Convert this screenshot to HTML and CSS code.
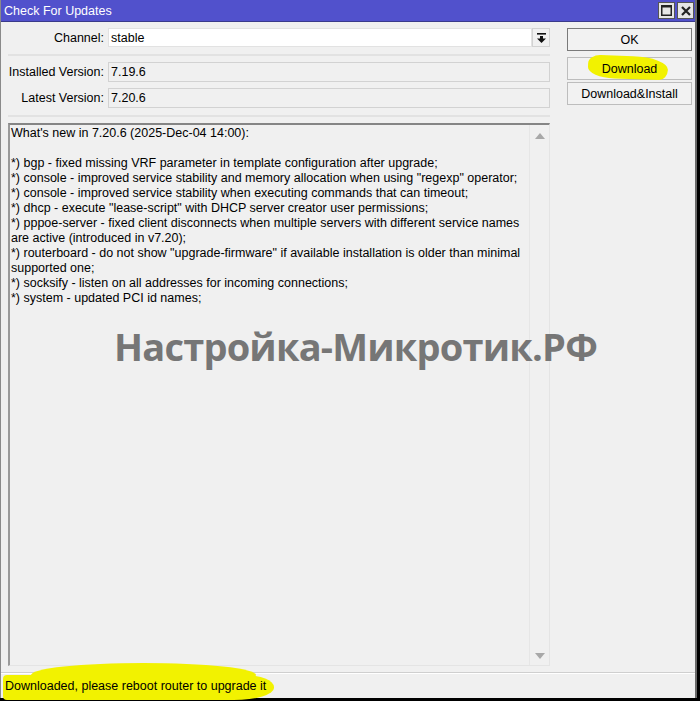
FILE: index.html
```html
<html>
  <head>
    <meta charset="utf-8">
    <link rel="stylesheet" href="styles.css">
  </head>
  <body>
    <div class="window">
      <div class="titlebar">
        <span class="title">Check For Updates</span>
        <div class="controls">
          <span class="ctl">
            <svg width="11" height="11" viewBox="0 0 11 11"><rect x="0.75" y="0.75" width="9.5" height="9.5" fill="none" stroke="#222" stroke-width="1.5"/><rect x="0" y="0" width="11" height="2.5" fill="#222"/></svg>
          </span>
          <span class="ctl">
            <svg width="10" height="10" viewBox="0 0 10 10"><path d="M1 1 L9 9 M9 1 L1 9" stroke="#222" stroke-width="2.2"/></svg>
          </span>
        </div>
      </div>

      <div class="content">
        <div class="left">
          <div class="row first">
            <label>Channel:</label>
            <div class="combo">
              <span class="field white">stable</span>
              <span class="drop">
                <svg width="9" height="10" viewBox="0 0 9 10"><rect x="0" y="0" width="9" height="1.6" fill="#111"/><rect x="3" y="3" width="3" height="3" fill="#111"/><polygon points="0,5.5 9,5.5 4.5,10" fill="#111"/></svg>
              </span>
            </div>
          </div>
          <div class="sep"></div>
          <div class="row">
            <label>Installed Version:</label>
            <span class="field">7.19.6</span>
          </div>
          <div class="row">
            <label>Latest Version:</label>
            <span class="field">7.20.6</span>
          </div>
          <div class="sep"></div>

          <div class="notes">
            <div class="text">What's new in 7.20.6 (2025-Dec-04 14:00):

*) bgp - fixed missing VRF parameter in template configuration after upgrade;
*) console - improved service stability and memory allocation when using "regexp" operator;
*) console - improved service stability when executing commands that can timeout;
*) dhcp - execute "lease-script" with DHCP server creator user permissions;
*) pppoe-server - fixed client disconnects when multiple servers with different service names
are active (introduced in v7.20);
*) routerboard - do not show "upgrade-firmware" if available installation is older than minimal
supported one;
*) socksify - listen on all addresses for incoming connections;
*) system - updated PCI id names;</div>
            <div class="scroll">
              <span class="arrow up"></span>
              <span class="arrow down"></span>
            </div>
          </div>
        </div>

        <div class="buttons">
          <button class="btn default">OK</button>
          <button class="btn"><span class="marker dl"></span><span class="label">Download</span></button>
          <button class="btn">Download&amp;Install</button>
        </div>

        <div class="watermark">Настройка-Микротик.РФ</div>
      </div>

      <div class="status">
        <span class="marker st1"></span>
        <span class="marker st2"></span>
        <span class="status-text">Downloaded, please reboot router to upgrade it</span>
      </div>
    </div>
  </body>
</html>
```

FILE: styles.css
```css
html {
  background: #000;
}

body {
  margin: 0;
  width: 700px;
  height: 701px;
  overflow: hidden;
  font-family: "Liberation Sans", Arial, sans-serif;
  font-size: 12.5px;
  color: #000;
}

.window {
  width: 697px;
  height: 698px;
  background: #f0f0f0;
  border-left: 1px solid #8a8a8a;
  border-right: 2px solid #6a6a6a;
  box-sizing: border-box;
  display: flex;
  flex-direction: column;
  position: relative;
}

.titlebar {
  height: 21px;
  flex: none;
  background: #5151cc;
  color: #fff;
  display: flex;
  align-items: center;
  justify-content: space-between;
  padding-left: 3px;
  border-bottom: 1px solid #3a3a8a;
}

.controls {
  display: flex;
  gap: 2px;
  padding-right: 1px;
}

.ctl {
  width: 15px;
  height: 15px;
  background: #e6e6e6;
  border: 1px solid #555;
  display: flex;
  align-items: center;
  justify-content: center;
}

.content {
  flex: 1;
  display: flex;
  position: relative;
  border-bottom: 1px solid #cfcfcf;
}

.left {
  width: 543px;
  margin-left: 6px;
  display: flex;
  flex-direction: column;
}

.row {
  display: flex;
  align-items: center;
  height: 20px;
  margin-top: 6px;
}

.row.first {
  margin-top: 6px;
  height: 19px;
}

.row label {
  width: 97px;
  text-align: right;
  padding-right: 4px;
  flex: none;
  white-space: nowrap;
}

.field {
  flex: 1;
  height: 100%;
  box-sizing: border-box;
  border: 1px solid #d2d2d2;
  padding-left: 2px;
  display: flex;
  align-items: center;
}

.field.white {
  background: #fff;
  border-color: #e2e2e2;
}

.combo {
  flex: 1;
  display: flex;
  height: 100%;
}

.drop {
  width: 18px;
  box-sizing: border-box;
  border: 1px solid #d2d2d2;
  display: flex;
  align-items: center;
  justify-content: center;
}

.sep {
  height: 0;
  border-top: 2px solid #e2e2e2;
  margin-top: 8px;
  margin-left: 1px;
}

.row + .sep {
  margin-top: 7px;
}

.notes {
  flex: 1;
  margin-top: 6px;
  margin-bottom: 6px;
  margin-left: 1px;
  display: flex;
  border-top: 2px solid #858585;
  border-left: 2px solid #9a9a9a;
  border-right: 1px solid #e4e4e4;
  border-bottom: 1px solid #e4e4e4;
}

.text {
  flex: 1;
  white-space: pre;
  line-height: 15px;
  padding: 1px 0 0 1px;
}

.scroll {
  width: 19px;
  border-left: 1px solid #e6e6e6;
  display: flex;
  flex-direction: column;
  justify-content: space-between;
  align-items: center;
  padding: 8px 0 6px;
}

.arrow {
  width: 0;
  height: 0;
  border-left: 5px solid transparent;
  border-right: 5px solid transparent;
}

.arrow.up {
  border-bottom: 6px solid #a8a8a8;
}

.arrow.down {
  border-top: 6px solid #a8a8a8;
}

.buttons {
  margin-left: 17px;
  margin-top: 6px;
  width: 125px;
  display: flex;
  flex-direction: column;
}

.btn {
  height: 23px;
  font: inherit;
  background: #f2f2f2;
  border: 1px solid #bdbdbd;
  padding: 0;
  margin-bottom: 2px;
  position: relative;
}

.btn.default {
  border: 1px solid #7a7a7a;
  margin-bottom: 6px;
}

.btn .label {
  position: relative;
}

.marker {
  position: absolute;
  background: #f2f200;
}

.marker.dl {
  left: 20px;
  top: -2px;
  width: 80px;
  height: 23px;
  border-radius: 14px 40px 10px 30px / 10px 14px 12px 12px;
  transform: rotate(2deg);
}

.watermark {
  position: absolute;
  left: 113px;
  top: 298px;
  font-family: "Open Sans", sans-serif;
  font-weight: 700;
  font-size: 38px;
  letter-spacing: -0.8px;
  color: #767676;
  white-space: nowrap;
}

.status {
  height: 24px;
  flex: none;
  border-top: 1px solid #ffffff;
  display: flex;
  align-items: center;
  position: relative;
  padding-left: 4px;
}

.status-text {
  position: relative;
}

.marker.st1 {
  left: 2px;
  top: 1px;
  width: 271px;
  height: 25px;
  border-radius: 4px 30px 40px 4px / 4px 12px 12px 4px;
}

.marker.st2 {
  left: 30px;
  top: -11px;
  width: 225px;
  height: 24px;
  border-radius: 50%;
}
```
